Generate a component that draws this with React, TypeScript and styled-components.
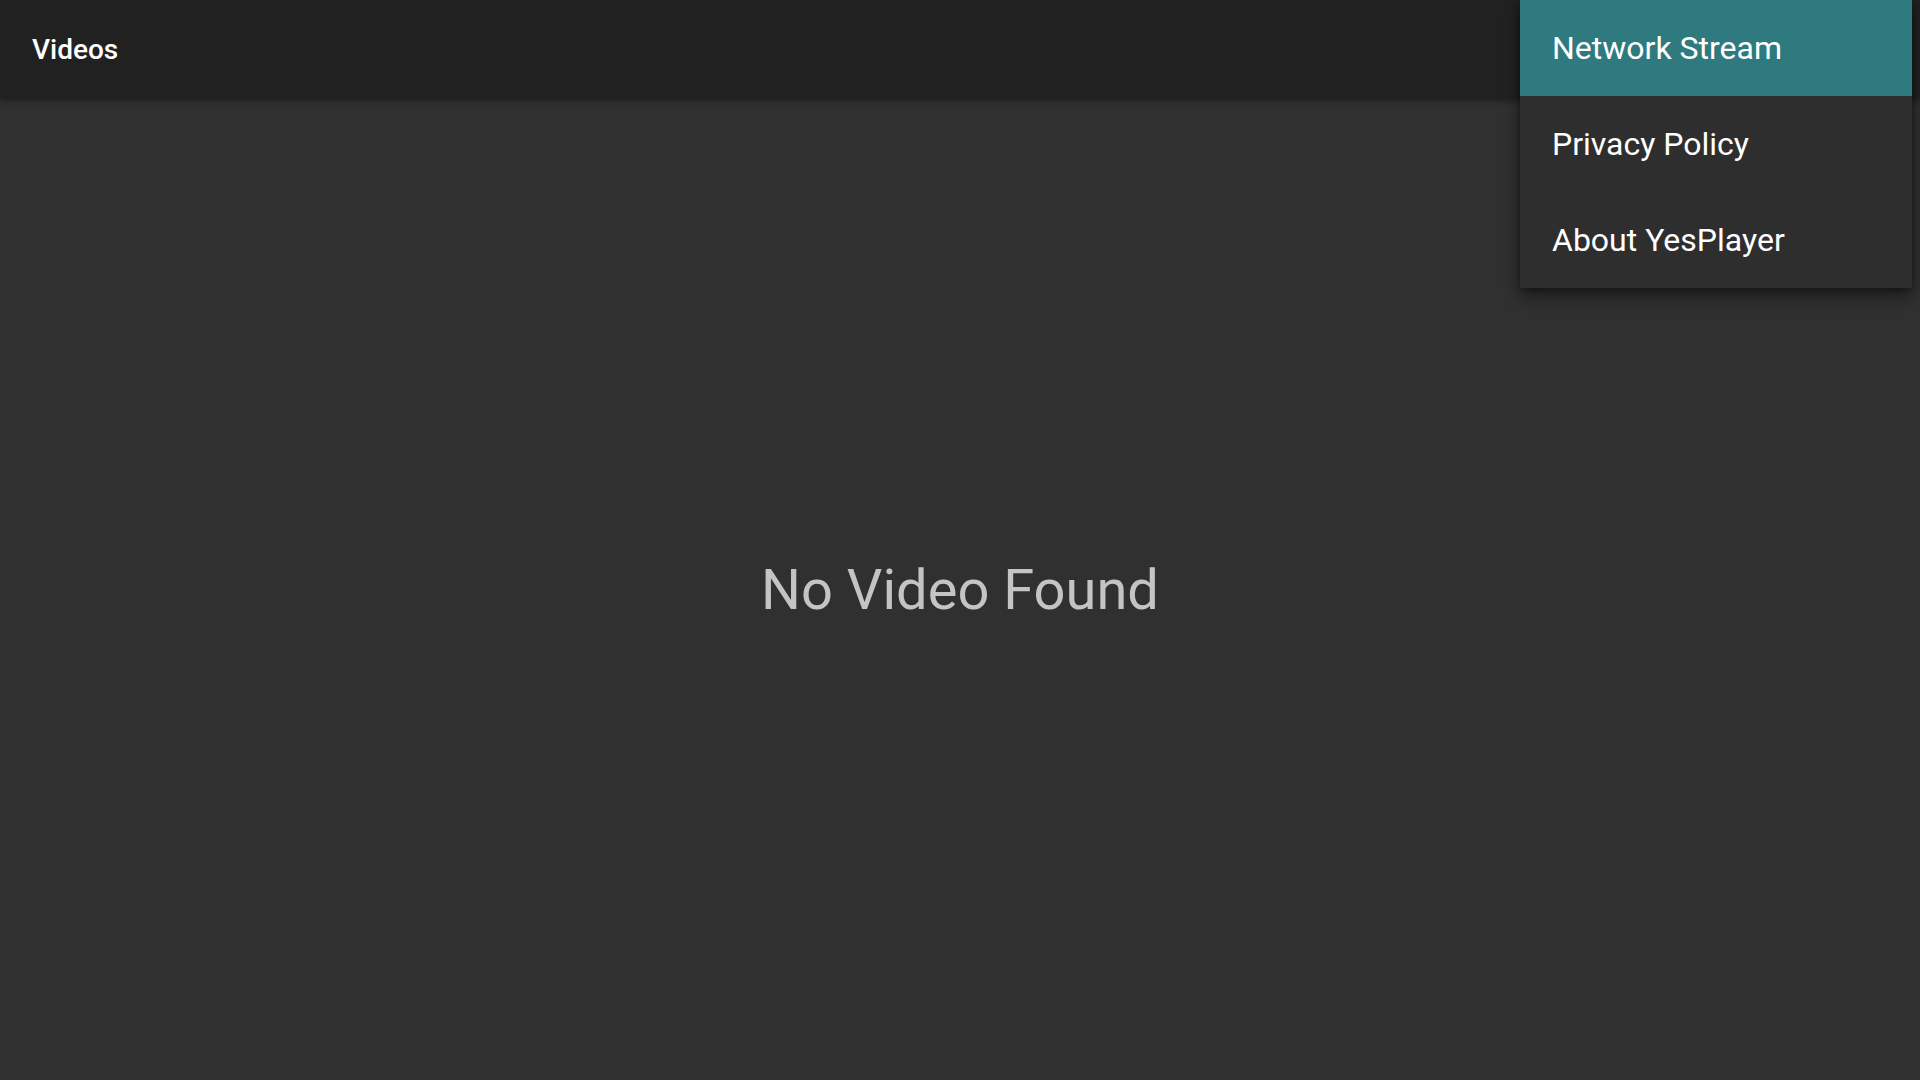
import React, { useState } from 'react'
import styled, { createGlobalStyle } from 'styled-components'

const GlobalStyle = createGlobalStyle`
  html, body {
    margin: 0;
    padding: 0;
    height: 100%;
    background: #303030;
    font-family: Roboto, 'Noto Sans', sans-serif;
  }
  #root {
    height: 100%;
  }
`

const Screen = styled.div`
  position: relative;
  width: 100%;
  height: 100vh;
  display: flex;
  flex-direction: column;
  background: #303030;
  overflow: hidden;
`

const AppBar = styled.header`
  height: 99px;
  flex: none;
  display: flex;
  align-items: center;
  padding: 0 32px;
  background: #212121;
  box-shadow: 0 2px 6px rgba(0, 0, 0, 0.35);
  z-index: 1;
`

const Title = styled.h1`
  margin: 0;
  font-size: 28px;
  font-weight: 500;
  color: #ffffff;
`

const Content = styled.main`
  flex: 1;
  display: flex;
  align-items: center;
  justify-content: center;
`

const EmptyText = styled.div`
  font-size: 56px;
  font-weight: 400;
  color: #c4c4c4;
`

const Menu = styled.ul`
  position: absolute;
  top: 0;
  right: 8px;
  width: 392px;
  margin: 0;
  padding: 0;
  list-style: none;
  background: #2e2e2e;
  box-shadow: 0 8px 16px rgba(0, 0, 0, 0.45), 0 2px 6px rgba(0, 0, 0, 0.3);
  z-index: 2;
`

const MenuItem = styled.li<{ $active: boolean }>`
  height: 96px;
  display: flex;
  align-items: center;
  padding: 0 32px;
  font-size: 32px;
  color: #ffffff;
  background: ${p => (p.$active ? '#2e7a7e' : 'transparent')};
  cursor: pointer;
`

const menuItems = ['Network Stream', 'Privacy Policy', 'About YesPlayer']

export default function App() {
  const [focused, setFocused] = useState(0)

  return (
    <>
      <GlobalStyle />
      <Screen>
        <AppBar>
          <Title>Videos</Title>
        </AppBar>
        <Content>
          <EmptyText>No Video Found</EmptyText>
        </Content>
        <Menu>
          {menuItems.map((item, i) => (
            <MenuItem key={item} $active={i === focused} onMouseEnter={() => setFocused(i)}>
              {item}
            </MenuItem>
          ))}
        </Menu>
      </Screen>
    </>
  )
}
